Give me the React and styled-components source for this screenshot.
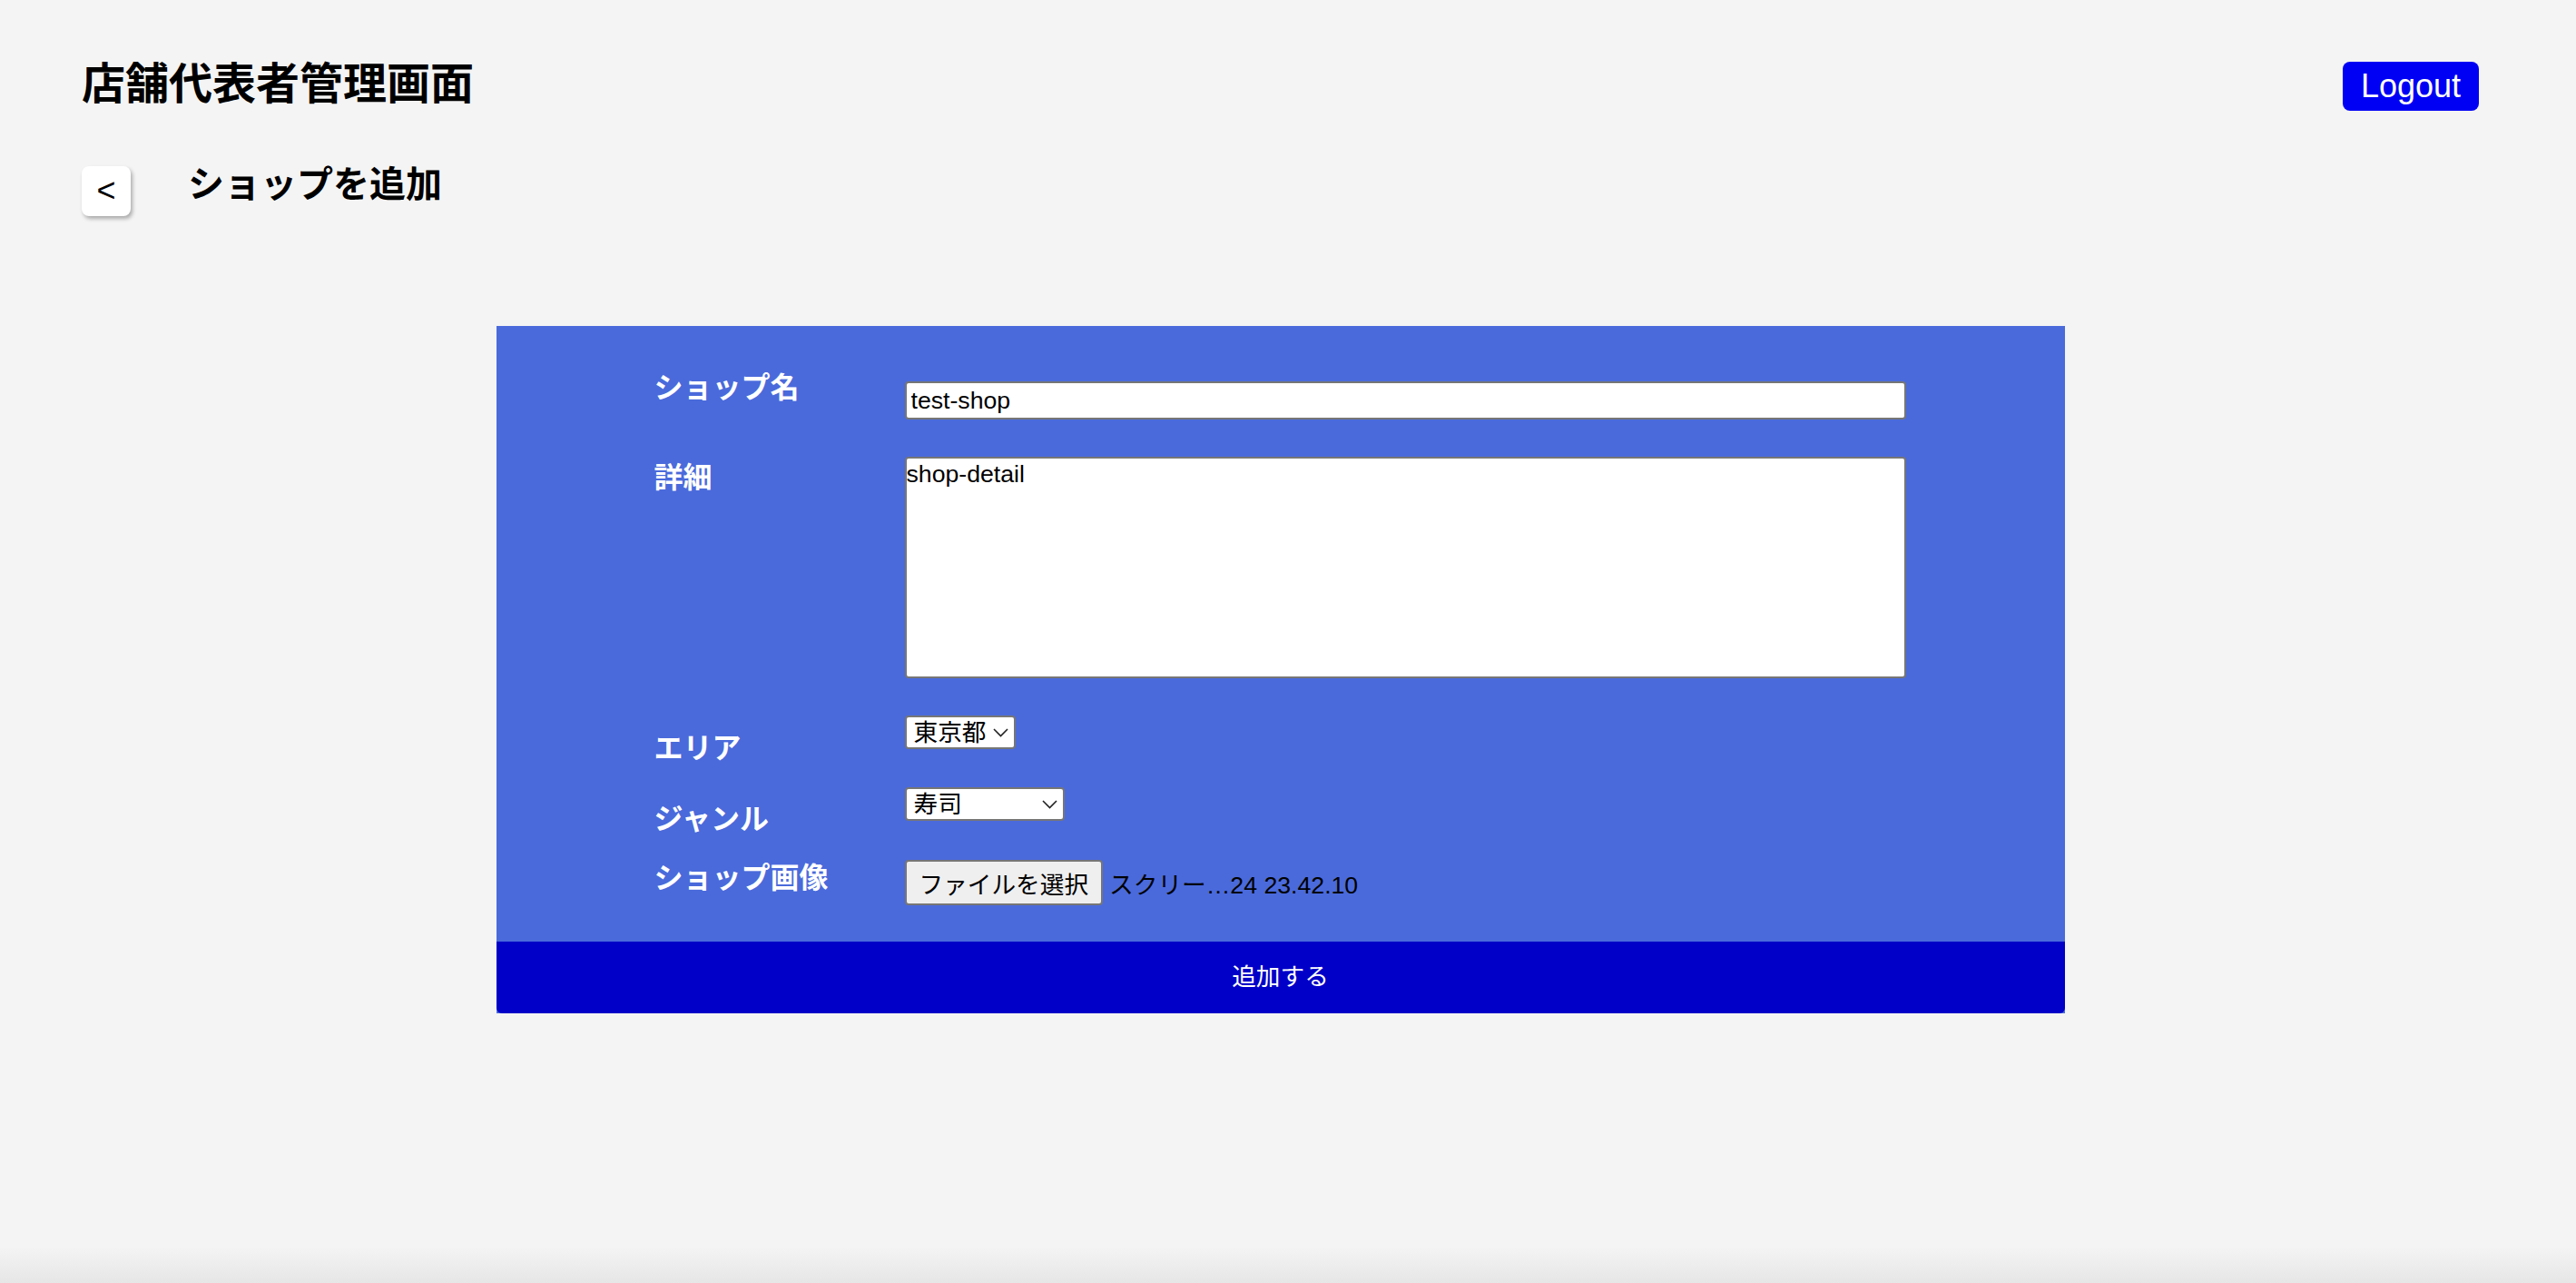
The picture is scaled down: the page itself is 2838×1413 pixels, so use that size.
import styled, { createGlobalStyle } from "styled-components";

const GlobalStyle = createGlobalStyle`
  body {
    margin: 0;
    font-family: "Liberation Sans", "Noto Sans CJK JP", sans-serif;
    background: #f4f4f4;
  }
`;

const fontStack = `"Liberation Sans", "Noto Sans CJK JP", sans-serif`;

const chevron = `url("data:image/svg+xml;utf8,<svg xmlns='http://www.w3.org/2000/svg' width='17' height='10' viewBox='0 0 17 10'><polyline points='1,1 8.5,8.5 16,1' fill='none' stroke='%23222' stroke-width='1.6'/></svg>")`;

const rows = [
  { gap: 0, label: 0, field: 9 },
  { gap: 41, label: 7, field: 0 },
  { gap: 41, label: 20, field: 0 },
  { gap: 27, label: 19, field: 0 },
  { gap: 29, label: 4, field: 0 },
];

const App = () => {
  return (
    <Page>
      <GlobalStyle />
      <Header>
        <Title>店舗代表者管理画面</Title>
        <LogoutButton>Logout</LogoutButton>
      </Header>
      <SubHeader>
        <BackButton>&lt;</BackButton>
        <SubTitle>ショップを追加</SubTitle>
      </SubHeader>
      <Panel>
        <FormBody>
          <Row $gap={rows[0].gap}>
            <Label $offset={rows[0].label}>ショップ名</Label>
            <Field $offset={rows[0].field}>
              <TextInput defaultValue="test-shop" />
            </Field>
          </Row>
          <Row $gap={rows[1].gap}>
            <Label $offset={rows[1].label}>詳細</Label>
            <Field $offset={rows[1].field}>
              <TextArea defaultValue="shop-detail" />
            </Field>
          </Row>
          <Row $gap={rows[2].gap}>
            <Label $offset={rows[2].label}>エリア</Label>
            <Field $offset={rows[2].field}>
              <Select $width={122} defaultValue="tokyo">
                <option value="tokyo">東京都</option>
                <option value="osaka">大阪府</option>
                <option value="fukuoka">福岡県</option>
              </Select>
            </Field>
          </Row>
          <Row $gap={rows[3].gap}>
            <Label $offset={rows[3].label}>ジャンル</Label>
            <Field $offset={rows[3].field}>
              <Select $width={176} defaultValue="sushi">
                <option value="sushi">寿司</option>
                <option value="yakiniku">焼肉</option>
                <option value="italian">イタリアン</option>
              </Select>
            </Field>
          </Row>
          <Row $gap={rows[4].gap}>
            <Label $offset={rows[4].label}>ショップ画像</Label>
            <Field $offset={rows[4].field}>
              <FileButton type="button">ファイルを選択</FileButton>
              <FileName>スクリー…24 23.42.10</FileName>
            </Field>
          </Row>
        </FormBody>
        <SubmitButton type="button">追加する</SubmitButton>
      </Panel>
    </Page>
  );
};

const Page = styled.div`
  min-height: 100vh;
  box-sizing: border-box;
  padding: 66px 107px 0 90px;
  background: linear-gradient(
    to bottom,
    #f4f4f4 calc(100% - 40px),
    #e6e6e6 100%
  );
`;

const Header = styled.header`
  display: flex;
  justify-content: space-between;
  align-items: flex-start;
`;

const Title = styled.h1`
  margin: 3px 0 0;
  font-size: 48px;
  font-weight: 700;
  line-height: 1;
  color: #000;
`;

const LogoutButton = styled.button`
  margin-top: 2px;
  width: 150px;
  height: 54px;
  border: none;
  border-radius: 8px;
  background: #0000f5;
  color: #fff;
  font-family: ${fontStack};
  font-size: 36px;
  line-height: 1;
  padding: 0;
  cursor: pointer;
`;

const SubHeader = styled.div`
  display: flex;
  align-items: flex-start;
  gap: 63px;
  margin-top: 61px;
`;

const BackButton = styled.button`
  width: 54px;
  height: 55px;
  border: none;
  border-radius: 8px;
  background: #fff;
  box-shadow: 2px 3px 4px rgba(0, 0, 0, 0.3);
  font-family: ${fontStack};
  font-size: 36px;
  line-height: 1;
  color: #000;
  padding: 0 0 2px;
  cursor: pointer;
`;

const SubTitle = styled.h2`
  margin: 0;
  font-size: 40px;
  font-weight: 700;
  line-height: 1;
`;

const Panel = styled.section`
  width: 1728px;
  margin: 121px auto 0;
  background: #4a6adb;
  display: flex;
  flex-direction: column;
`;

const FormBody = styled.div`
  display: flex;
  flex-direction: column;
  padding: 52px 0 40px 174px;
`;

const Row = styled.div`
  display: flex;
  align-items: flex-start;
  margin-top: ${(props) => props.$gap}px;
`;

const Label = styled.div`
  width: 276px;
  flex-shrink: 0;
  margin-top: ${(props) => props.$offset}px;
  color: #fff;
  font-size: 32px;
  font-weight: 700;
  line-height: 1;
`;

const Field = styled.div`
  display: flex;
  align-items: center;
  gap: 7px;
  margin-top: ${(props) => props.$offset}px;
`;

const TextInput = styled.input`
  width: 1103px;
  height: 42px;
  box-sizing: border-box;
  border: 2px solid #767676;
  border-radius: 4px;
  padding: 0 5px;
  background: #fff;
  font-family: ${fontStack};
  font-size: 26.67px;
  color: #000;
`;

const TextArea = styled.textarea`
  display: block;
  width: 1103px;
  height: 244px;
  box-sizing: border-box;
  border: 2px solid #767676;
  border-radius: 4px;
  padding: 2px 0 0;
  background: #fff;
  font-family: ${fontStack};
  font-size: 26.67px;
  color: #000;
  resize: none;
`;

const Select = styled.select`
  appearance: none;
  width: ${(props) => props.$width}px;
  height: 37px;
  box-sizing: border-box;
  border: 2px solid #767676;
  border-radius: 4px;
  padding: 0 30px 0 8px;
  background: #fff ${chevron} no-repeat right 6px center;
  font-family: ${fontStack};
  font-size: 26.67px;
  color: #000;
`;

const FileButton = styled.button`
  height: 50px;
  box-sizing: border-box;
  padding: 0 14px;
  border: 2px solid #767676;
  border-radius: 4px;
  background: #efefef;
  font-family: ${fontStack};
  font-size: 26.67px;
  color: #000;
  cursor: pointer;
`;

const FileName = styled.span`
  font-size: 26.67px;
  color: #000;
`;

const SubmitButton = styled.button`
  width: 100%;
  height: 79px;
  border: none;
  border-radius: 0 0 6px 6px;
  background: #0000c8;
  color: #fff;
  font-family: ${fontStack};
  font-size: 26.67px;
  padding: 0 0 6px;
  cursor: pointer;
`;

export default App;
